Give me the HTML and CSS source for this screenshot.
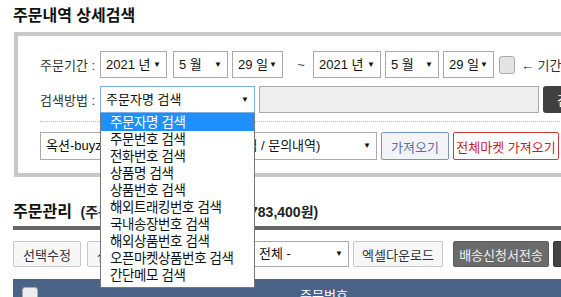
FILE: index.html
```html
<!DOCTYPE html>
<html lang="ko">
<head>
    <meta charset="UTF-8">
    <meta name="viewport" content="width=device-width, initial-scale=1.0">
    <title>주문내역 상세검색</title>
    <link rel="stylesheet" href="styles.css">
</head>
<body>
    <div class="page">
        <div class="title">주문내역 상세검색</div>

        <div class="search-box">
            <div class="row">
                <span class="label">주문기간 :</span>
                <div class="sel w-year1">2021 년<span class="arrow">▼</span></div>
                <div class="sel w-month1">5 월<span class="arrow">▼</span></div>
                <div class="sel w-day">29 일<span class="arrow">▼</span></div>
                <span class="tilde">~</span>
                <div class="sel w-year2">2021 년<span class="arrow">▼</span></div>
                <div class="sel w-month2">5 월<span class="arrow">▼</span></div>
                <div class="sel w-day">29 일<span class="arrow">▼</span></div>
                <span class="check"></span>
                <span class="hint">← 기간<span class="hint-mark">지정</span></span>
            </div>
            <div class="row">
                <span class="label">검색방법 :</span>
                <div class="sel focus w-method">주문자명 검색<span class="arrow">▼</span></div>
                <div class="text-input"></div>
                <button class="btn-dark">검색</button>
            </div>
            <div class="divider"></div>
            <div class="row">
                <div class="sel w-market">옥션-buyzone77 (판매 연동) (주문내역 / 문의내역)<span class="arrow">▼</span></div>
                <button class="btn-blue">가져오기</button>
                <button class="btn-red">전체마켓 가져오기</button>
            </div>
        </div>

        <div class="section-title">
            <b>주문관리</b>
            <span class="summary">(주문합계 : 총 128건 / 총 12,783,400원)</span>
        </div>
        <div class="section-line"></div>

        <div class="toolbar">
            <button class="btn">선택수정</button>
            <button class="btn">선택삭제</button>
            <div class="sel w-status">전체 -<span class="arrow">▼</span></div>
            <button class="btn w-excel">엑셀다운로드</button>
            <button class="btn-gray">배송신청서전송</button>
            <button class="btn-dark2">송장일괄</button>
        </div>

        <div class="table-head">
            <span class="check head-check"></span>
            <span class="col-order">주문번호</span>
        </div>

        <ul class="dropdown">
            <li class="active">주문자명 검색</li>
            <li>주문번호 검색</li>
            <li>전화번호 검색</li>
            <li>상품명 검색</li>
            <li>상품번호 검색</li>
            <li>해외트래킹번호 검색</li>
            <li>국내송장번호 검색</li>
            <li>해외상품번호 검색</li>
            <li>오픈마켓상품번호 검색</li>
            <li>간단메모 검색</li>
        </ul>
    </div>
</body>
</html>
```

FILE: styles.css
```css
body {
    margin: 0;
    font-family: "Liberation Sans", "Noto Sans CJK KR", sans-serif;
    font-size: 13px;
    color: #222;
    background: #fff;
    overflow: hidden;
}
.page {
    position: relative;
    width: 700px;
    padding: 6px 0 0 13px;
}
.title {
    font-size: 16px;
    font-weight: bold;
    line-height: 20px;
    margin: 0 0 6px 0;
    color: #111;
}
.search-box {
    margin-left: 1px;
    border: 4px solid #c8c8c8;
    padding: 15px 0 13px 22px;
    width: 640px;
}
.row {
    display: flex;
    align-items: center;
    height: 27px;
    white-space: nowrap;
}
.row + .row {
    margin-top: 8px;
}
.label {
    width: 60px;
    color: #333;
}
.sel {
    position: relative;
    box-sizing: border-box;
    height: 27px;
    line-height: 25px;
    border: 1px solid #aaa;
    background: #fff;
    padding-left: 5px;
    margin-right: 4px;
    color: #111;
    overflow: hidden;
    white-space: nowrap;
}
.sel .arrow {
    position: absolute;
    right: 5px;
    top: 0;
    font-size: 8px;
    background: #fff;
    padding-left: 2px;
}
.w-year1 { width: 67px; margin-right: 6px; }
.w-month1 { width: 55px; }
.w-day { width: 51px; }
.w-year2 { width: 68px; }
.w-month2 { width: 54px; }
.tilde {
    width: 24px;
    text-align: center;
    margin-left: 2px;
    color: #444;
}
.check {
    display: inline-block;
    width: 14px;
    height: 16px;
    border: 1px solid #aaa;
    border-radius: 3px;
    background: #e4e4e4;
    margin: 0 6px 0 1px;
}
.hint {
    color: #333;
}
.hint-mark {
    color: #f0a020;
    margin-left: 2px;
}
.focus {
    border-color: #7eaee8;
}
.w-method { width: 155px; }
.text-input {
    width: 280px;
    height: 27px;
    box-sizing: border-box;
    border: 1px solid #aaa;
    background: #eee;
    margin-right: 4px;
}
.btn-dark {
    height: 27px;
    padding: 0 14px;
    border: none;
    border-radius: 3px;
    background: #404040;
    color: #fff;
    font: inherit;
}
.divider {
    border-top: 1px dotted #bbb;
    margin: 8px 0 10px 0;
}
.search-box .row:last-child {
    height: 28px;
}
.w-market {
    width: 337px;
    height: 28px;
    line-height: 26px;
}
.btn-blue, .btn-red {
    box-sizing: border-box;
    height: 28px;
    font: inherit;
    padding: 0;
    border-radius: 2px;
}
.btn-blue {
    width: 68px;
    border: 1px solid #7d92cc;
    background: #f4f4f6;
    color: #5a70ad;
    margin-right: 4px;
}
.btn-red {
    width: 106px;
    border: 1px solid #cf3a3a;
    background: #fff;
    color: #c81e1e;
}
.section-title {
    margin-top: 25px;
    line-height: 20px;
    white-space: nowrap;
}
.section-title b {
    font-size: 16px;
    color: #111;
}
.summary {
    font-size: 14px;
    font-weight: bold;
    margin-left: 5px;
    color: #222;
}
.section-line {
    height: 4px;
    background: #666;
    margin-top: 3px;
}
.toolbar {
    display: flex;
    align-items: center;
    margin-top: 11px;
    height: 26px;
    white-space: nowrap;
}
.btn, .btn-gray, .btn-dark2 {
    box-sizing: border-box;
    height: 26px;
    font: inherit;
    border-radius: 2px;
    margin-right: 6px;
    padding: 0;
}
.btn {
    width: 68px;
    border: 1px solid #c8c8c8;
    background: #f7f7f7;
    color: #333;
}
.w-status {
    width: 96px;
    height: 26px;
    line-height: 24px;
    margin-left: 92px;
}
.w-excel { width: 90px; margin-right: 10px; }
.btn-gray {
    width: 96px;
    border: 1px solid #5c5c5c;
    background: #6b6b6b;
    color: #eee;
    margin-right: 4px;
}
.btn-dark2 {
    width: 80px;
    border: 1px solid #333;
    background: #444;
    color: #fff;
}
.table-head {
    position: relative;
    margin-top: 12px;
    height: 30px;
    background: #4a6387;
}
.head-check {
    position: absolute;
    left: 9px;
    top: 8px;
    width: 14px;
    height: 14px;
    margin: 0;
    background: #ececec;
}
.col-order {
    position: absolute;
    left: 287px;
    top: 6px;
    color: #fff;
    font-size: 13px;
}
.dropdown {
    position: absolute;
    left: 100px;
    top: 113px;
    width: 155px;
    box-sizing: border-box;
    margin: 0;
    padding: 0 0 3px 0;
    list-style: none;
    background: #fff;
    border: 1px solid #777;
    font-size: 13.5px;
    letter-spacing: -0.4px;
}
.dropdown li {
    height: 17px;
    line-height: 17px;
    padding-left: 9px;
    color: #111;
    white-space: nowrap;
}
.dropdown .active {
    background: #1e90ff;
    color: #fff;
}
```
